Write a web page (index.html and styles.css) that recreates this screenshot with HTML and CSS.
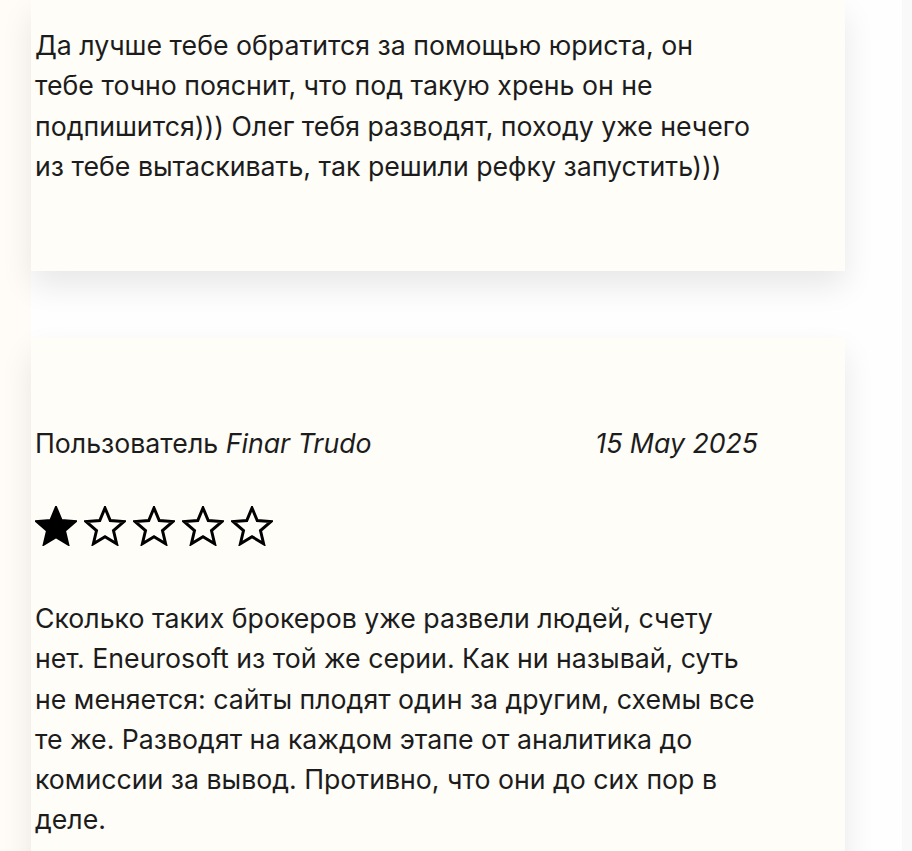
FILE: index.html
```html
<!DOCTYPE html>
<html lang="ru">
<head>
<meta charset="utf-8">
<title>Отзывы</title>
<link rel="stylesheet" href="styles.css">
</head>
<body>
<div class="page">
  <div class="gutter"></div>
  <main class="feed">
    <article class="card card-first">
      <p class="review-text">Да лучше тебе обратится за помощью юриста, он<br>тебе точно пояснит, что под такую хрень он не<br>подпишится))) Олег тебя разводят, походу уже нечего<br>из тебе вытаскивать, так решили рефку запустить)))</p>
    </article>
    <article class="card card-second">
      <header class="review-head">
        <span class="author">Пользователь <em>Finar Trudo</em></span>
        <em class="date">15 May 2025</em>
      </header>
      <div class="stars" aria-label="1 из 5">
        <svg class="star filled" viewBox="0 0 24 22.8"><path d="M12 1.1L15 8.27L22.75 8.91L16.85 13.98L18.64 21.54L12 17.5L5.36 21.54L7.15 13.98L1.25 8.91L9 8.27Z"/></svg>
        <svg class="star" viewBox="0 0 24 22.8"><path d="M12 1.1L15 8.27L22.75 8.91L16.85 13.98L18.64 21.54L12 17.5L5.36 21.54L7.15 13.98L1.25 8.91L9 8.27Z"/></svg>
        <svg class="star" viewBox="0 0 24 22.8"><path d="M12 1.1L15 8.27L22.75 8.91L16.85 13.98L18.64 21.54L12 17.5L5.36 21.54L7.15 13.98L1.25 8.91L9 8.27Z"/></svg>
        <svg class="star" viewBox="0 0 24 22.8"><path d="M12 1.1L15 8.27L22.75 8.91L16.85 13.98L18.64 21.54L12 17.5L5.36 21.54L7.15 13.98L1.25 8.91L9 8.27Z"/></svg>
        <svg class="star" viewBox="0 0 24 22.8"><path d="M12 1.1L15 8.27L22.75 8.91L16.85 13.98L18.64 21.54L12 17.5L5.36 21.54L7.15 13.98L1.25 8.91L9 8.27Z"/></svg>
      </div>
      <p class="review-text wrap">Сколько таких брокеров уже развели людей, счету нет. Eneurosoft из той же серии. Как ни называй, суть не меняется: сайты плодят один за другим, схемы все те же. Разводят на каждом этапе от аналитика до комиссии за вывод. Противно, что они до сих пор в деле.</p>
    </article>
  </main>
</div>
</body>
</html>
```
FILE: styles.css
```css
html, body {
  margin: 0;
  padding: 0;
  height: 100%;
}
body {
  background: #fffcf8;
  font-family: Inter, "Noto Sans", sans-serif;
  color: #1c1c1c;
  overflow: hidden;
}
.page {
  display: flex;
  min-height: 100%;
}
.gutter {
  width: 31px;
  flex: none;
  background: #fffcf7;
}
.feed {
  flex: 1;
  background: linear-gradient(to right, #fefefe 0, #fefefe 871px, #f9f9f9 871px, #f9f9f9 100%);
  display: flex;
  flex-direction: column;
  gap: 67px;
}
.card {
  width: 810px;
  background: #fffdf8;
  padding-left: 4px;
  box-shadow: 0 15px 30px rgba(0, 0, 0, 0.09);
}
.card-first {
  padding-top: 25px;
  padding-bottom: 85px;
}
.card-second {
  padding-top: 85px;
  padding-bottom: 60px;
}
.review-text {
  margin: 0;
  font-size: 26.7px;
  line-height: 40.3px;
}
.wrap {
  width: 722px;
  margin-top: 52px;
  line-height: 40.2px;
}
.review-head {
  width: 723px;
  display: flex;
  justify-content: space-between;
  font-size: 26.7px;
  line-height: 40px;
}
.review-head em {
  font-style: italic;
}
.stars {
  margin-top: 43px;
  display: flex;
  gap: 7px;
  height: 40px;
}
.star {
  width: 42px;
  height: 40px;
  fill: none;
  stroke: #000;
  stroke-width: 1.7;
  stroke-linejoin: miter;
}
.star.filled {
  fill: #000;
}
```
